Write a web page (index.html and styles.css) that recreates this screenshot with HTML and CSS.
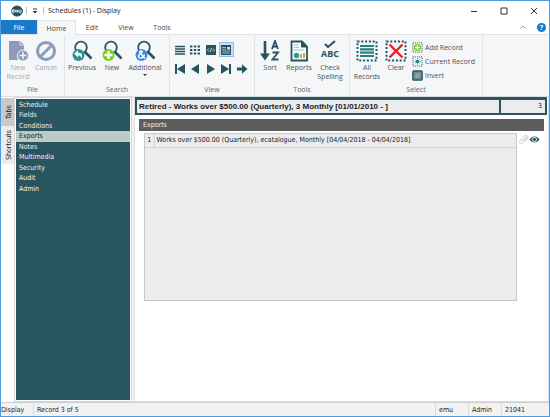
FILE: index.html
```html
<!DOCTYPE html>
<html lang="en">
<head>
<meta charset="utf-8">
<title>Schedules (1) - Display</title>
<link rel="stylesheet" href="styles.css">
</head>
<body>
<div class="window">
  <header class="titlebar">
    <svg class="logo" viewBox="0 0 12 12" aria-hidden="true"><circle cx="6" cy="6" r="5.5" fill="#26545f"/><path d="M0 4.2h12v3.6H0z" fill="#3d7078"/><path d="M1 6c0-2 2-2 2 0H1c0 2 2 1.500 2 1M4 7.500V5l1.300 1.500L6.500 5v2.500M8 5v1.500c0 1.500 2 1.500 2 0V5" fill="none" stroke="#fff" stroke-width=".8"/></svg>
    <span class="divider"></span>
    <button class="quick" aria-label="Customize toolbar"><svg viewBox="0 0 6 6"><path d="M1 1h4" stroke="#333" stroke-width="1"/><path d="M.5 3h5L3 5.500z" fill="#333"/></svg></button>
    <span class="divider"></span>
    <h1 class="title">Schedules (1) - Display</h1>
    <div class="winbuttons">
      <button aria-label="Minimize"><svg viewBox="0 0 8 8"><path d="M1 4.500h6" stroke="#333" stroke-width="1"/></svg></button>
      <button aria-label="Maximize"><svg viewBox="0 0 8 8"><path d="M1 1h6v6H1z" fill="none" stroke="#333"/></svg></button>
      <button aria-label="Close"><svg viewBox="0 0 8 8"><path d="M1 1l6 6M7 1L1 7" stroke="#333"/></svg></button>
    </div>
  </header>

  <nav class="menubar">
    <button class="menu file">File</button>
    <button class="menu active">Home</button>
    <button class="menu">Edit</button>
    <button class="menu wide">View</button>
    <button class="menu wide">Tools</button>
    <button class="collapse" aria-label="Collapse ribbon"><svg viewBox="0 0 8 8"><path d="M1.500 5.500L4 3l2.500 2.500" fill="none" stroke="#999"/></svg></button>
    <button class="help" aria-label="Help">?</button>
  </nav>

  <div class="ribbon">
    <section class="group g-file">
      <div class="tools">
        <button class="tool" disabled><svg viewBox="0 0 22 22"><path d="M2 1h11l4 4v7h-2a5 5 0 0 0-4 8H2z" fill="#8c9bb9"/><path d="M13 1v4h4" fill="none" stroke="#f5f6f7" stroke-width=".8"/><circle cx="16" cy="15.500" r="5.500" fill="#8c9bb9" stroke="#f5f6f7"/><path d="M16 12v7M12.500 15.500h7" stroke="#f5f6f7" stroke-width="1.400"/></svg>New<br>Record</button>
        <button class="tool" disabled><svg viewBox="0 0 22 22"><circle cx="11" cy="11" r="8.500" fill="none" stroke="#8c9bb9" stroke-width="3"/><path d="M5 17L17 5" stroke="#8c9bb9" stroke-width="3"/></svg>Cancel</button>
      </div>
      <h2>File</h2>
    </section>
    <section class="group g-search">
      <div class="tools">
        <button class="tool"><svg viewBox="0 0 22 22"><circle cx="10" cy="7.500" r="5.800" fill="none" stroke="#26545f" stroke-width="1.800"/><path d="M14 12l6.500 6.500" stroke="#26545f" stroke-width="2.600"/><circle cx="7.500" cy="15" r="6" fill="#2a9090"/><path d="M3 13.500l4-3v2c4 0 5 3 3 6 0-2.500-1-3-3-3v2z" fill="#fff"/></svg>Previous</button>
        <button class="tool"><svg viewBox="0 0 22 22"><circle cx="10" cy="7.500" r="5.800" fill="none" stroke="#26545f" stroke-width="1.800"/><path d="M14 12l6.500 6.500" stroke="#26545f" stroke-width="2.600"/><circle cx="7.500" cy="15" r="6" fill="#76cf24"/><path d="M7.500 11v8M3.500 15h8" stroke="#fff" stroke-width="2.400"/></svg>New</button>
        <button class="tool"><svg viewBox="0 0 22 22"><circle cx="10" cy="7.500" r="5.800" fill="none" stroke="#26545f" stroke-width="1.800"/><path d="M14 12l6.500 6.500" stroke="#26545f" stroke-width="2.600"/><circle cx="7.500" cy="15" r="6" fill="#4288e0"/><path d="M11 18.500L6 12.800c-1.500-2 2.800-2.600 2.200-.6-.3 1-3.700 2-3.700 4 0 3 4.800 2.500 6-1.700" fill="none" stroke="#fff" stroke-width="1.400"/></svg>Additional<span class="arrow"></span></button>
      </div>
      <h2>Search</h2>
    </section>
    <section class="group g-view">
      <div class="viewgrid">
        <button aria-label="List"><svg viewBox="0 0 12 12"><path d="M1 2.500h10M1 5h10M1 7.500h10M1 10h10" stroke="#26545f" stroke-width="1.400"/></svg></button>
        <button aria-label="Grid"><svg viewBox="0 0 12 12"><path d="M1 2.500h10M1 6h10M1 9.500h10" stroke="#26545f" stroke-width="2.200" stroke-dasharray="2.400 1.400"/></svg></button>
        <button aria-label="Source"><svg viewBox="0 0 12 12"><path d="M1 1h10v10H1z" fill="#26545f"/><path d="M4 4.500L2.500 6 4 7.500M8 4.500L9.500 6 8 7.500M6.600 4L5.400 8" fill="none" stroke="#fff" stroke-width=".7"/></svg></button>
        <button class="on" aria-label="Form"><svg viewBox="0 0 12 12"><path d="M1 1h10v10H1z" fill="#26545f"/><path d="M2 3.500h4M2 5.200h4M2 7h8M2 9h8" stroke="#cfe0ee" stroke-width=".7"/><path d="M7 3h3v2.500H7z" fill="#cfe0ee"/></svg></button>
        <span></span>
        <button aria-label="First"><svg viewBox="0 0 12 12"><path d="M1 1h2v10H1zM11 1v10L3 6z" fill="#26545f"/></svg></button>
        <button aria-label="Back"><svg viewBox="0 0 12 12"><path d="M10 1v10L2 6z" fill="#26545f"/></svg></button>
        <button aria-label="Forward"><svg viewBox="0 0 12 12"><path d="M2 1v10l8-5z" fill="#26545f"/></svg></button>
        <button aria-label="Last"><svg viewBox="0 0 12 12"><path d="M9 1h2v10H9zM1 1v10l8-5z" fill="#26545f"/></svg></button>
        <button aria-label="Go to"><svg viewBox="0 0 12 12"><path d="M1 4.500h5V1.200L11.500 6 6 10.800V7.500H1z" fill="#26545f"/></svg></button>
      </div>
      <h2>View</h2>
    </section>
    <section class="group g-tools">
      <div class="tools">
        <button class="tool"><svg viewBox="0 0 22 22"><path d="M6 1v15" stroke="#26545f" stroke-width="2.600"/><path d="M1 13.500h10L6 20.500z" fill="#26545f"/><path d="M13 9l3-8 3 8M14 6.500h4M13.500 12.500H19l-5.500 7h6" fill="none" stroke="#26545f" stroke-width="1.800"/></svg>Sort</button>
        <button class="tool"><svg viewBox="0 0 22 22"><path d="M3.500 1.500h10.500l5 5v14H3.500z" fill="#f4fafa" stroke="#26545f" stroke-width="1.800"/><path d="M13.500 1.500v5.500H19" fill="#26545f" stroke="#26545f"/><path d="M6 5h5M6 7.500h5M6 10h10" stroke="#9db5b9" stroke-width=".8"/><circle cx="8.500" cy="15.500" r="2.700" fill="#2a9d9d"/><path d="M12 18v-4h2v4zM15 18v-5h2v5z" fill="#e89c45"/></svg>Reports</button>
        <button class="tool"><span class="abc"><svg viewBox="0 0 12 8"><path d="M1 4l3 3 7-6" fill="none" stroke="#26545f" stroke-width="2"/></svg>ABC</span>Check<br>Spelling</button>
      </div>
      <h2>Tools</h2>
    </section>
    <section class="group g-select">
      <div class="tools">
        <button class="tool"><svg viewBox="0 0 22 22"><path d="M1.500 1.500h19v19h-19z" fill="none" stroke="#26545f" stroke-width="2" stroke-dasharray="2 1.800"/><path d="M4 6h14M4 9.300h14M4 12.700h14M4 16h14" stroke="#26807f" stroke-width="2.200"/></svg>All<br>Records</button>
        <button class="tool"><svg viewBox="0 0 22 22"><path d="M1.500 1.500h19v19h-19z" fill="none" stroke="#26545f" stroke-width="2" stroke-dasharray="2 1.800"/><path d="M4.500 4.500l13 13M17.500 4.500l-13 13" stroke="#ee1c25" stroke-width="2.400"/></svg>Clear</button>
        <div class="small">
          <button><svg viewBox="0 0 12 12"><path d="M1 1h10v10H1z" fill="none" stroke="#26545f" stroke-dasharray="1.200 1"/><circle cx="6" cy="6" r="3.900" fill="#76cf24"/><path d="M6 3.500v5M3.500 6h5" stroke="#fff" stroke-width="1.400"/></svg>Add Record</button>
          <button><svg viewBox="0 0 12 12"><path d="M1 1h10v10H1z" fill="none" stroke="#26545f" stroke-dasharray="1.200 1"/><path d="M2 6h8M6 2v8M3 3l6 6M9 3L3 9" stroke="#6fb5ba" stroke-width=".8"/><circle cx="6" cy="6" r="2" fill="#26807f"/></svg>Current Record</button>
          <button><svg viewBox="0 0 12 12"><rect x="1" y="1" width="10" height="10" rx="1" fill="#8ba4ab" stroke="#26545f" stroke-width="1.600"/><path d="M3 3h6v6H3z" fill="none" stroke="#26545f" stroke-width=".7" stroke-dasharray="1 .8"/></svg>Invert</button>
        </div>
      </div>
      <h2>Select</h2>
    </section>
  </div>

  <div class="body">
    <div class="sidetabs">
      <button class="current">Tabs</button>
      <button>Shortcuts</button>
    </div>
    <aside class="panel">
      <ul class="pages">
        <li><a href="#">Schedule</a></li>
        <li><a href="#">Fields</a></li>
        <li><a href="#">Conditions</a></li>
        <li class="selected"><a href="#">Exports</a></li>
        <li><a href="#">Notes</a></li>
        <li><a href="#">Multimedia</a></li>
        <li><a href="#">Security</a></li>
        <li><a href="#">Audit</a></li>
        <li><a href="#">Admin</a></li>
      </ul>
    </aside>
    <main class="main">
      <div class="record">
        <span class="summary">Retired - Works over $500.00 (Quarterly), 3 Monthly [01/01/2010 - ]</span>
        <span class="number">3</span>
      </div>
      <section class="exports">
        <h2>Exports</h2>
        <div class="content">
          <div class="list">
            <table>
              <tr><th scope="row">1</th><td>Works over $500.00 (Quarterly), ecatalogue, Monthly [04/04/2018 - 04/04/2018]</td></tr>
            </table>
          </div>
          <div class="actions">
            <button aria-label="Attach"><svg viewBox="0 0 11 11"><path d="M3.500 7.500l4-4.500c1-1 2.200 0 1.300 1.100L4.500 9C2.800 10.700.3 9 1.800 7L6 2.200C8 0 11 2 9.500 4.500L7 7.500" fill="none" stroke="#c9c9c4" stroke-width=".9"/></svg></button>
            <button aria-label="View attachment"><svg viewBox="0 0 11 11"><path d="M.5 5.500C3 1.500 8 1.500 10.500 5.500 8 9.500 3 9.500.5 5.500z" fill="#26545f"/><circle cx="5.500" cy="5.500" r="2.100" fill="#26545f" stroke="#fff" stroke-width=".9"/></svg></button>
          </div>
        </div>
      </section>
    </main>
  </div>

  <footer class="status">
    <span class="mode">Display</span>
    <span class="position">Record 3 of 5</span>
    <span class="user">emu</span>
    <span class="role">Admin</span>
    <span class="ident">21041</span>
  </footer>
</div>
</body>
</html>
```
FILE: styles.css
```css
* { box-sizing: border-box; }

body {
  margin: 0;
  font: 7px/9px "Open Sans", "Noto Sans", sans-serif;
  color: #444;
}

h1, h2, ul { margin: 0; padding: 0; font: inherit; }

button {
  margin: 0;
  padding: 0;
  border: 0;
  background: none;
  font: inherit;
  color: inherit;
}

svg { display: block; flex: none; }

.window {
  display: flex;
  flex-direction: column;
  min-height: 100vh;
  border: 1px solid #4f9be0;
  background: #fff;
}

/* Title bar */
.titlebar {
  display: flex;
  align-items: center;
  height: 19px;
  padding-left: 10px;
}
.logo { width: 12px; height: 12px; margin-right: 3px; }
.divider { width: 1px; height: 7px; background: #bbb; }
.quick { padding: 0 5px; }
.quick svg { width: 6px; height: 6px; }
.title { padding-left: 4px; color: #222; }
.winbuttons { display: flex; margin-left: auto; }
.winbuttons button { display: grid; place-items: center; width: 30px; height: 19px; }
.winbuttons svg { width: 8px; height: 8px; }

/* Menu tabs */
.menubar {
  display: flex;
  height: 15px;
  border-bottom: 1px solid #e3e4e6;
}
.menu { width: 32px; }
.menu.wide { width: 36px; }
.menu.file { width: 36px; background: #1979ca; color: #fff; }
.menu.active {
  width: 39px;
  height: 15px;
  border: 1px solid #e3e4e6;
  border-bottom: 0;
  background: #f5f6f7;
}
.collapse { margin-left: auto; }
.collapse svg { width: 8px; height: 8px; }
.help {
  align-self: center;
  width: 9px;
  height: 9px;
  margin: 0 3px 0 10px;
  border-radius: 50%;
  background: #1979ca;
  color: #fff;
  font-weight: bold;
}

/* Ribbon */
.ribbon {
  display: flex;
  height: 62px;
  border-bottom: 1px solid #dcdddf;
  background: #f5f6f7;
  color: #505050;
}
.group {
  display: flex;
  flex-direction: column;
  justify-content: space-between;
  padding: 5px 0 2px;
  border-right: 1px solid #e2e3e5;
}
.group h2 { text-align: center; color: #666; }
.tools, .viewgrid { display: grid; }
.g-file { width: 64px; }
.g-file .tools { grid-template-columns: 32px 24px; padding-left: 1px; }
.g-search { width: 105px; }
.g-search .tools { grid-template-columns: 32px 28px 38px; padding-left: 1px; }
.g-view { width: 85px; }
.viewgrid {
  grid-template-columns: 15px 16px 15px 16px 16px;
  grid-auto-rows: 19px;
  padding-left: 2px;
}
.g-tools { width: 95px; }
.g-tools .tools { grid-template-columns: 24px 34px 28px; padding-left: 3px; }
.g-select { width: 133px; }
.g-select .tools { grid-template-columns: 34px 24px auto; }

.tool {
  display: block;
  align-self: start;
  white-space: nowrap;
  text-align: center;
}
.tool:disabled { color: #a3a7ae; }
.tool > svg { width: 22px; height: 22px; margin: 0 auto 1px; }
.arrow {
  display: block;
  width: 0;
  margin: 2px auto 0;
  border: 2px solid transparent;
  border-top-color: #333;
}
.abc {
  display: block;
  height: 23px;
  font: bold 9px/12px "Open Sans", sans-serif;
  color: #26545f;
}
.abc svg { width: 12px; height: 8px; margin: 0 auto; }

.viewgrid button { display: grid; place-items: center; }
.viewgrid svg { width: 12px; height: 12px; }
.viewgrid .on {
  place-self: center;
  width: 15px;
  height: 15px;
  border: 1px solid #8dbcf0;
  background: #c9e0f7;
}

.small { display: grid; grid-auto-rows: 14px; padding-left: 4px; }
.small button { display: flex; align-items: center; gap: 2px; white-space: nowrap; }
.small svg { width: 11px; height: 11px; }

/* Work area */
.body {
  display: flex;
  flex: 1;
  font: 7px/10px "DejaVu Sans Condensed", "DejaVu Sans", sans-serif;
  background: #f4f4f5;
  color: #222;
}
.sidetabs { display: flex; flex-direction: column; width: 13px; padding-top: 1px; background: #fff; }
.sidetabs button {
  height: 38px;
  padding-right: 2px;
  writing-mode: vertical-rl;
  transform: rotate(180deg);
  background: #ececec;
}
.sidetabs .current { height: 28px; background: #c9c9c9; }
.panel {
  width: 118px;
  padding: 1px;
  border: 1px solid #d5d5d5;
  background: #fff;
}
.pages {
  display: grid;
  height: 100%;
  grid-template-rows: repeat(4, 10px 11px) 10px;
  align-content: start;
  padding-top: 1px;
  list-style: none;
  background: #28555f;
}
.pages a {
  display: block;
  padding-left: 3px;
  color: #eef3f4;
  text-decoration: none;
}
.pages .selected { background: #bccbc6; }
.pages .selected a { color: #222; }

.main {
  flex: 1;
  min-width: 0;
  margin-left: 2px;
  border: 1px solid #dcdcdc;
  border-top: 0;
  background: #fff;
}
.record {
  display: flex;
  gap: 2px;
  margin-right: 1px;
  padding: 3px 2px 2px;
  background: #28555f;
  line-height: 13px;
}
.summary, .number { background: #ececee; }
.summary {
  flex: 1;
  padding-left: 2px;
  font: bold 8px/13px "Liberation Sans", sans-serif;
  white-space: nowrap;
}
.number { width: 44px; padding-right: 3px; text-align: right; }
.exports { margin: 4px 4px 0; }
.exports h2 {
  padding-left: 4px;
  background: #5c5e5d;
  color: #eee;
  line-height: 12px;
}
.content { display: flex; padding: 2px 0 0 5px; }
.list {
  flex: 1;
  height: 168px;
  border: 1px solid #c6c8c7;
  background: #ebecee;
}
table { width: 100%; border-collapse: collapse; }
th, td {
  height: 13px;
  padding: 0 2px;
  border-bottom: 1px solid #d4d5d7;
  font-weight: normal;
  white-space: nowrap;
}
th { width: 9px; border-right: 1px solid #d4d5d7; }
.actions { display: flex; width: 27px; padding: 1px 0 0 1px; align-items: start; }
.actions svg { width: 11px; height: 11px; }

/* Status bar */
.status {
  display: flex;
  height: 14px;
  border-top: 1px solid #cfcfcf;
  background: #f2f2f2;
  font: 7px/15px "DejaVu Sans Condensed", "DejaVu Sans", sans-serif;
  color: #222;
}
.status span + span { padding-left: 3px; border-left: 1px solid #dcdcdc; }
.mode { width: 32px; }
.position { flex: 1; }
.user { width: 33px; }
.role { width: 33px; }
.ident { width: 48px; }
```
